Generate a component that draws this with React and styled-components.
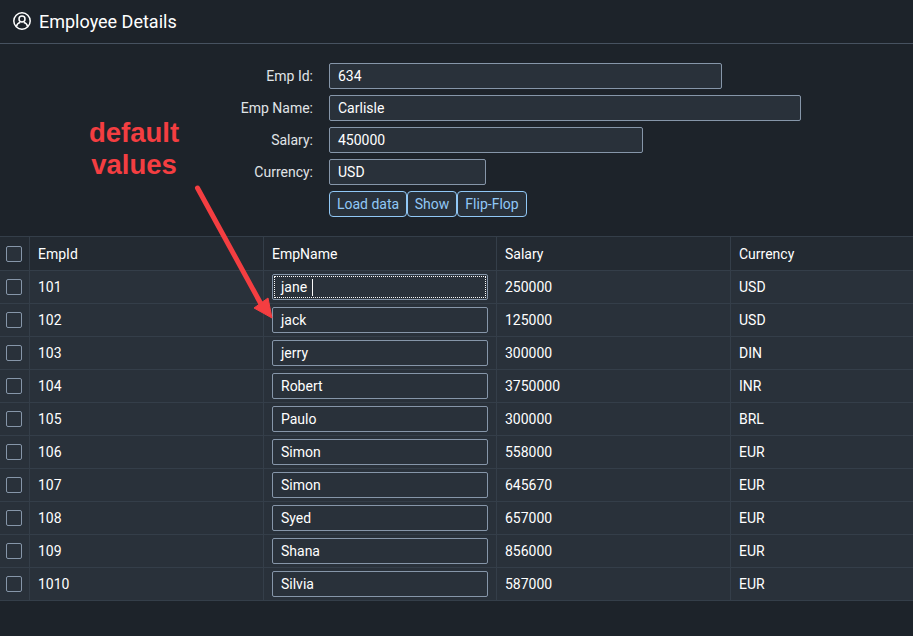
import React from 'react'
import styled, { createGlobalStyle } from 'styled-components'

const GlobalStyle = createGlobalStyle`
  html, body {
    margin: 0;
    padding: 0;
    height: 100%;
    background: #1d232a;
  }
  * {
    box-sizing: border-box;
  }
`

const Page = styled.div`
  position: relative;
  width: 913px;
  height: 636px;
  overflow: hidden;
  background: #1d232a;
  color: #f5f6f7;
  font-family: Roboto, "Liberation Sans", sans-serif;
  font-size: 14px;
`

const Header = styled.header`
  display: flex;
  align-items: center;
  gap: 8px;
  height: 44px;
  padding: 0 0 2px 13px;
  border-bottom: 1px solid #475260;
`

const Title = styled.h1`
  margin: 0;
  padding-top: 1px;
  font-size: 18px;
  font-weight: 400;
  color: #fff;
`

const Form = styled.form`
  display: flex;
  flex-direction: column;
  gap: 6px;
  height: 192px;
  padding-top: 19px;
`

const FormRow = styled.div`
  display: flex;
  align-items: center;
  gap: 16px;
  height: 26px;
`

const Label = styled.label`
  width: 313px;
  text-align: right;
  color: #e0e4e7;
`

const TextBox = styled.div`
  display: flex;
  align-items: center;
  width: ${p => p.$width}px;
  height: 26px;
  padding: 0 8px;
  color: #fff;
  background: #29313a;
  border: 1px solid #8696a9;
  border-radius: 2px;
`

const Buttons = styled.div`
  display: flex;
  margin-left: 329px;
`

const Button = styled.button`
  width: ${p => p.$width}px;
  height: 26px;
  padding: 0;
  font: inherit;
  color: #91c8f6;
  background: #29313a;
  border: 1px solid #91c8f6;
  border-radius: 4px;
`

const Table = styled.div`
  border-top: 1px solid #343e49;
  border-bottom: 1px solid #343e49;
`

const Row = styled.div`
  display: grid;
  grid-template-columns: 30px 234px 233px 234px 1fr;
  height: ${p => p.$head ? 34 : 33}px;
  background: ${p => p.$head ? '#232a32' : '#29313a'};
  border-bottom: 1px solid #343e49;

  &:last-child {
    border-bottom: 0;
    height: 32px;
  }
`

const Cell = styled.div`
  display: flex;
  align-items: center;
  padding: 0 8px;
  border-right: 1px solid #343e49;
  color: #fff;

  &:last-child {
    border-right: 0;
  }
`

const CheckCell = styled(Cell)`
  padding: 0 0 0 6px;
`

const CheckBox = styled.span`
  width: 16px;
  height: 16px;
  background: #29313a;
  border: 1px solid #8696a9;
  border-radius: 2px;
`

const RowInput = styled.div`
  position: relative;
  display: flex;
  align-items: center;
  width: 216px;
  height: 26px;
  padding: 0 8px;
  color: #fff;
  background: #29313a;
  border: 1px solid #8696a9;
  border-radius: 2px;

  ${p => p.$focused && `
    &::after {
      content: '';
      position: absolute;
      inset: 1px;
      border: 1px dotted #fafafa;
    }
  `}
`

const Caret = styled.span`
  width: 1px;
  height: 17px;
  margin-left: 5px;
  background: #fafafa;
`

const Note = styled.div`
  position: absolute;
  left: 68px;
  top: 117px;
  width: 132px;
  text-align: center;
  font-family: "Liberation Sans", Arial, sans-serif;
  font-size: 27.5px;
  font-weight: 700;
  line-height: 32px;
  color: #f43e41;
`

const Arrow = styled.svg`
  position: absolute;
  left: 190px;
  top: 180px;
`

const rows = [
  ['101', 'jane', '250000', 'USD'],
  ['102', 'jack', '125000', 'USD'],
  ['103', 'jerry', '300000', 'DIN'],
  ['104', 'Robert', '3750000', 'INR'],
  ['105', 'Paulo', '300000', 'BRL'],
  ['106', 'Simon', '558000', 'EUR'],
  ['107', 'Simon', '645670', 'EUR'],
  ['108', 'Syed', '657000', 'EUR'],
  ['109', 'Shana', '856000', 'EUR'],
  ['1010', 'Silvia', '587000', 'EUR'],
]

const fields = [
  ['Emp Id:', '634', 393],
  ['Emp Name:', 'Carlisle', 472],
  ['Salary:', '450000', 314],
  ['Currency:', 'USD', 157],
]

const App = () => {
  return (
    <Page>
      <GlobalStyle />
      <Header>
        <svg width="18" height="18" viewBox="0 0 18 18" fill="none" stroke="#fff" strokeWidth="1.5">
          <circle cx="9" cy="9" r="8.2" />
          <circle cx="9" cy="7" r="3" />
          <path d="M3.4 14.6c.6-2.6 2.6-3.9 3.8-4.1M14.6 14.6c-.6-2.6-2.6-3.9-3.8-4.1" />
        </svg>
        <Title>Employee Details</Title>
      </Header>

      <Form>
        {fields.map(([label, value, width]) => (
          <FormRow key={label}>
            <Label>{label}</Label>
            <TextBox $width={width}>{value}</TextBox>
          </FormRow>
        ))}
        <Buttons>
          <Button type="button" $width={78}>Load data</Button>
          <Button type="button" $width={50}>Show</Button>
          <Button type="button" $width={70}>Flip-Flop</Button>
        </Buttons>
      </Form>

      <Table>
        <Row $head>
          <CheckCell><CheckBox /></CheckCell>
          <Cell>EmpId</Cell>
          <Cell>EmpName</Cell>
          <Cell>Salary</Cell>
          <Cell>Currency</Cell>
        </Row>
        {rows.map(([id, name, salary, currency], i) => (
          <Row key={id}>
            <CheckCell><CheckBox /></CheckCell>
            <Cell>{id}</Cell>
            <Cell>
              <RowInput $focused={i === 0}>
                {name}
                {i === 0 && <Caret />}
              </RowInput>
            </Cell>
            <Cell>{salary}</Cell>
            <Cell>{currency}</Cell>
          </Row>
        ))}
      </Table>

      <Note>default<br />values</Note>
      <Arrow width="90" height="145" viewBox="0 0 90 145">
        <path d="M7.5 8 L71 124" stroke="#f43e41" strokeWidth="5" strokeLinecap="round" fill="none" />
        <path d="M82 138 L64 128 L78 118 Z" fill="#f43e41" stroke="#f43e41" strokeWidth="1" />
      </Arrow>
    </Page>
  )
}

export default App
